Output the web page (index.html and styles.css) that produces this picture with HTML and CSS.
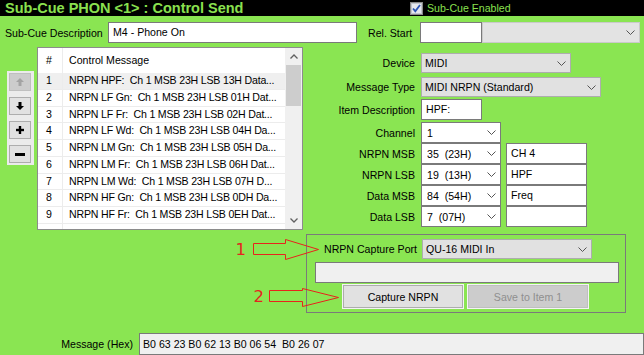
FILE: index.html
```html
<!DOCTYPE html>
<html>
<head>
<meta charset="utf-8">
<link rel="stylesheet" href="styles.css">
</head>
<body>
<div class="titlebar">
  <span class="title-text">Sub-Cue PHON &lt;1&gt; : Control Send</span>
  <span class="enabled">
    <svg class="chk" width="13" height="13" viewBox="0 0 13 13"><rect x="0.5" y="0.5" width="12" height="12" fill="#d9dce2" stroke="#8a8a8a"/><rect x="1.5" y="1.5" width="10" height="10" fill="#e6e8ee" stroke="#c2c6ce"/><path d="M3 6.5 L5.3 9.2 L10 3" fill="none" stroke="#2d55b5" stroke-width="1.8"/></svg>
    <span>Sub-Cue Enabled</span>
  </span>
</div>

<div class="desc-row">
  <span class="lbl-desc">Sub-Cue Description</span>
  <div class="tb w-desc">M4 - Phone On</div>
  <span class="lbl-rel">Rel. Start</span>
  <div class="tb w-rel"></div>
  <div class="cb cb-dis w-relcb"><span></span><svg class="chev" width="9" height="5" viewBox="0 0 9 5"><polyline points="0.5,0.5 4.5,4.5 8.5,0.5" fill="none" stroke="#555"/></svg></div>
</div>

<div class="main">
  <div class="btnpanel">
    <div class="tbtn tbtn-dis"><svg width="8" height="8" viewBox="0 0 8 8"><polygon points="4,0 8,4 5.5,4 5.5,8 2.5,8 2.5,4 0,4" fill="#a3a3a3"/></svg></div>
    <div class="tbtn"><svg width="8" height="8" viewBox="0 0 8 8"><polygon points="4,8 8,4 5.5,4 5.5,0 2.5,0 2.5,4 0,4" fill="#000"/></svg></div>
    <div class="tbtn"><svg width="8" height="8" viewBox="0 0 8 8"><rect x="2.8" y="0" width="2.4" height="8" fill="#000"/><rect x="0" y="2.8" width="8" height="2.4" fill="#000"/></svg></div>
    <div class="tbtn"><svg width="10" height="3" viewBox="0 0 10 3"><rect x="0" y="0" width="10" height="3" fill="#000"/></svg></div>
  </div>

  <div class="list">
    <div class="lcontent">
      <div class="lhead"><div class="c1">#</div><div class="c2">Control Message</div></div>
      <div class="lrow sel"><div class="c1">1</div><div class="c2">NRPN HPF:  Ch 1 MSB 23H LSB 13H Data...</div></div>
      <div class="lrow"><div class="c1">2</div><div class="c2">NRPN LF Gn:  Ch 1 MSB 23H LSB 01H Dat...</div></div>
      <div class="lrow"><div class="c1">3</div><div class="c2">NRPN LF Fr:  Ch 1 MSB 23H LSB 02H Dat...</div></div>
      <div class="lrow"><div class="c1">4</div><div class="c2">NRPN LF Wd:  Ch 1 MSB 23H LSB 04H Da...</div></div>
      <div class="lrow"><div class="c1">5</div><div class="c2">NRPN LM Gn:  Ch 1 MSB 23H LSB 05H Da...</div></div>
      <div class="lrow"><div class="c1">6</div><div class="c2">NRPN LM Fr:  Ch 1 MSB 23H LSB 06H Dat...</div></div>
      <div class="lrow"><div class="c1">7</div><div class="c2">NRPN LM Wd:  Ch 1 MSB 23H LSB 07H D...</div></div>
      <div class="lrow"><div class="c1">8</div><div class="c2">NRPN HF Gn:  Ch 1 MSB 23H LSB 0DH Da...</div></div>
      <div class="lrow"><div class="c1">9</div><div class="c2">NRPN HF Fr:  Ch 1 MSB 23H LSB 0EH Dat...</div></div>
      <div class="lrow"><div class="c1"></div><div class="c2"></div></div>
    </div>
    <div class="sbar">
      <div class="sb-btn"><svg width="8" height="5" viewBox="0 0 8 5"><polyline points="0.5,4.5 4,1 7.5,4.5" fill="none" stroke="#606060" stroke-width="1.3"/></svg></div>
      <div class="sb-track"><div class="sb-thumb"></div></div>
      <div class="sb-btn"><svg width="8" height="5" viewBox="0 0 8 5"><polyline points="0.5,0.5 4,4 7.5,0.5" fill="none" stroke="#606060" stroke-width="1.3"/></svg></div>
    </div>
  </div>

  <div class="right">
    <div class="frow r-dev"><span class="flbl">Device</span><div class="cb w-dev"><span>MIDI</span><svg class="chev" width="9" height="5" viewBox="0 0 9 5"><polyline points="0.5,0.5 4.5,4.5 8.5,0.5" fill="none" stroke="#555"/></svg></div></div>
    <div class="frow r-type"><span class="flbl">Message Type</span><div class="cb w-type"><span>MIDI NRPN (Standard)</span><svg class="chev" width="9" height="5" viewBox="0 0 9 5"><polyline points="0.5,0.5 4.5,4.5 8.5,0.5" fill="none" stroke="#555"/></svg></div></div>
    <div class="frow r-item"><span class="flbl">Item Description</span><div class="tb w-item">HPF:</div></div>
    <div class="frow r-chan"><span class="flbl">Channel</span><div class="ecb"><span>1</span><svg class="chev" width="9" height="5" viewBox="0 0 9 5"><polyline points="0.5,0.5 4.5,4.5 8.5,0.5" fill="none" stroke="#555"/></svg></div></div>
    <div class="frow r-n"><span class="flbl">NRPN MSB</span><div class="ecb"><span>35  (23H)</span><svg class="chev" width="9" height="5" viewBox="0 0 9 5"><polyline points="0.5,0.5 4.5,4.5 8.5,0.5" fill="none" stroke="#555"/></svg></div><div class="tb w-note">CH 4</div></div>
    <div class="frow r-n"><span class="flbl">NRPN LSB</span><div class="ecb"><span>19  (13H)</span><svg class="chev" width="9" height="5" viewBox="0 0 9 5"><polyline points="0.5,0.5 4.5,4.5 8.5,0.5" fill="none" stroke="#555"/></svg></div><div class="tb w-note">HPF</div></div>
    <div class="frow r-n"><span class="flbl">Data MSB</span><div class="ecb"><span>84  (54H)</span><svg class="chev" width="9" height="5" viewBox="0 0 9 5"><polyline points="0.5,0.5 4.5,4.5 8.5,0.5" fill="none" stroke="#555"/></svg></div><div class="tb w-note">Freq</div></div>
    <div class="frow r-n"><span class="flbl">Data LSB</span><div class="ecb"><span>7  (07H)</span><svg class="chev" width="9" height="5" viewBox="0 0 9 5"><polyline points="0.5,0.5 4.5,4.5 8.5,0.5" fill="none" stroke="#555"/></svg></div><div class="tb w-note"></div></div>

    <div class="group">
      <div class="g-row1"><span class="g-lbl">NRPN Capture Port</span><div class="cb w-port"><span>QU-16 MIDI In</span><svg class="chev" width="9" height="5" viewBox="0 0 9 5"><polyline points="0.5,0.5 4.5,4.5 8.5,0.5" fill="none" stroke="#555"/></svg></div></div>
      <div class="tb tb-ro w-cap"></div>
      <div class="g-btns"><div class="btn">Capture NRPN</div><div class="btn btn-dis">Save to Item 1</div></div>
    </div>
  </div>
</div>

<div class="msg-row">
  <span class="msg-lbl">Message (Hex)</span>
  <div class="tb tb-ro w-msg">B0 63 23 B0 62 13 B0 06 54  B0 26 07</div>
</div>

<svg class="annot" width="112" height="80" viewBox="230 232 112 80">
  <text x="235.5" y="255" class="annot-num">1</text>
  <polygon points="253.5,243.5 285.5,243.5 285.5,239.5 318.5,249.5 285.5,259.5 285.5,254.5 253.5,254.5" fill="none" stroke="#e8221c" stroke-width="1"/>
  <text x="253.5" y="302" class="annot-num">2</text>
  <polygon points="269.5,290.5 302.5,290.5 302.5,288.5 338.5,297.5 302.5,306.5 302.5,301.5 269.5,301.5" fill="none" stroke="#e8221c" stroke-width="1"/>
</svg>
</body>
</html>
```

FILE: styles.css
```css
* { box-sizing: border-box; }

body {
  margin: 0;
  width: 644px;
  height: 355px;
  overflow: hidden;
  position: relative;
  background: #8ae552;
  font-family: "Liberation Sans", Arial, sans-serif;
  font-size: 10.6px;
  color: #000;
}

.titlebar {
  height: 16px;
  background: #000;
  display: flex;
  align-items: center;
}
.title-text {
  width: 410px;
  padding-left: 5px;
  font-weight: bold;
  font-size: 14.5px;
  line-height: 16px;
  color: #8ae04f;
  white-space: nowrap;
}
.enabled {
  display: flex;
  align-items: center;
  gap: 4px;
  color: #8ae04f;
  font-size: 10.6px;
}
.chk { display: block; }

/* generic controls */
.tb {
  height: 21px;
  background: #fff;
  border: 1px solid #7a7a7a;
  padding: 0 4px;
  line-height: 19px;
  white-space: pre;
  overflow: hidden;
}
.tb-ro { background: #f0f0f0; }

.cb {
  height: 20px;
  background: #e1e1e1;
  border: 1px solid #adadad;
  display: flex;
  align-items: center;
  justify-content: space-between;
  padding: 0 4px 0 3px;
  white-space: pre;
}
.cb-dis { background: #e3e3e3; border-color: #cacaca; }
.ecb {
  width: 80px;
  height: 21px;
  background: #fff;
  border: 1px solid #7a7a7a;
  display: flex;
  align-items: center;
  justify-content: space-between;
  padding: 0 4px 0 5px;
  white-space: pre;
}
.chev { display: block; flex: none; }

/* description row */
.desc-row {
  display: flex;
  align-items: center;
  margin-top: 6px;
  height: 21px;
}
.lbl-desc { width: 108px; padding-left: 5px; white-space: nowrap; }
.w-desc { width: 249px; }
.lbl-rel { margin-left: 11px; width: 52px; white-space: nowrap; }
.w-rel { width: 62px; }
.w-relcb { width: 158px; height: 21px; }

/* main area */
.main {
  display: flex;
  align-items: flex-start;
  margin-top: 4px;
}

.btnpanel {
  margin-left: 7px;
  margin-top: 24px;
  width: 27px;
  padding: 2px 3px 2px 2px;
  background: #ebebeb;
  display: flex;
  flex-direction: column;
  gap: 6px;
}
.tbtn {
  width: 22px;
  height: 18px;
  background: #e1e1e1;
  border: 1px solid #adadad;
  display: flex;
  align-items: center;
  justify-content: center;
}
.tbtn svg { display: block; }
.tbtn-dis { background: #cccccc; border-color: #bfbfbf; }

.list {
  margin-left: 3px;
  width: 266px;
  height: 183px;
  border: 1px solid #8c8c8c;
  background: #fff;
  display: flex;
  overflow: hidden;
}
.lcontent { flex: 1; overflow: hidden; }
.lhead {
  height: 25px;
  display: flex;
  align-items: stretch;
  line-height: 25px;
}
.lrow {
  height: 16.75px;
  display: flex;
  border-bottom: 1px solid #ececec;
  line-height: 15.75px;
  white-space: pre;
}
.lrow .c2 { letter-spacing: -0.2px; }
.lrow.sel { background: #efefef; }
.c1 {
  width: 25px;
  flex: none;
  padding-left: 8px;
  border-right: 1px solid #ececec;
}
.c2 { flex: 1; padding-left: 6px; white-space: pre; overflow: hidden; }

.sbar {
  width: 17px;
  flex: none;
  background: #f0f0f0;
  display: flex;
  flex-direction: column;
}
.sb-btn {
  height: 17px;
  display: flex;
  align-items: center;
  justify-content: center;
}
.sb-btn svg { display: block; }
.sb-track { flex: 1; padding: 0 1px; }
.sb-thumb { height: 41px; background: #cdcdcd; }

/* right form */
.right { display: flex; flex-direction: column; }
.frow { display: flex; align-items: center; }
.flbl { width: 112px; text-align: right; margin-right: 6px; white-space: nowrap; }
.r-dev { margin-top: 6px; height: 20px; }
.r-type { margin-top: 4px; height: 20px; }
.r-item { margin-top: 2px; height: 21px; }
.r-chan { margin-top: 2px; height: 21px; }
.r-n { height: 21px; }
.w-dev { width: 150px; }
.w-type { width: 180px; }
.w-item { width: 61px; }
.w-note { width: 81px; margin-left: 5px; }

.group {
  margin-top: 7px;
  margin-left: 3px;
  width: 320px;
  height: 79px;
  border: 1px solid #7a7a7a;
  padding: 4px 0 0 0;
}
.g-row1 { display: flex; align-items: center; height: 20px; padding-left: 17px; }
.g-lbl { width: 98px; white-space: nowrap; }
.w-port { width: 170px; }
.w-cap { width: 304px; margin-left: 8px; margin-top: 3px; }
.g-btns { display: flex; gap: 5px; margin-left: 36px; margin-top: 2px; }
.btn {
  width: 120px;
  height: 23px;
  background: #e1e1e1;
  border: 1px solid #adadad;
  box-shadow: 0 0 0 1px #f4f4f4;
  display: flex;
  align-items: center;
  justify-content: center;
}
.btn-dis { background: #cccccc; border-color: #bfbfbf; color: #8f8f8f; }

/* message row */
.msg-row { display: flex; align-items: center; margin-top: 20px; }
.msg-lbl { width: 133px; text-align: right; margin-right: 6px; white-space: nowrap; }
.w-msg { width: 505px; height: 22px; line-height: 20px; padding-left: 3px; }

/* annotations */
.annot { position: absolute; left: 230px; top: 232px; }
.annot-num { font-family: "DejaVu Sans", sans-serif; font-size: 16.5px; fill: #e52420; }
```
